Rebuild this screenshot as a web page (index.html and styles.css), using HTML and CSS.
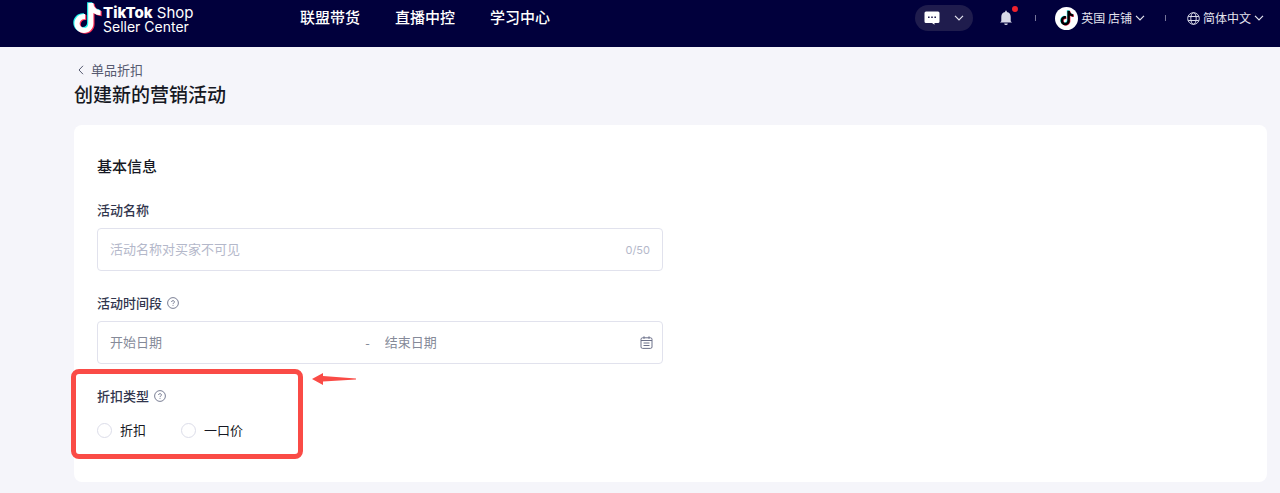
FILE: index.html
```html
<!DOCTYPE html>
<html lang="zh-CN">
<head>
  <meta charset="utf-8">
  <title>创建新的营销活动</title>
  <link rel="stylesheet" href="styles.css">
</head>
<body>
  <svg class="defs" width="0" height="0" aria-hidden="true">
    <symbol id="note" viewBox="3.3 2.4 17.4 19.2">
      <path class="cyan" transform="translate(-.7 -.5)" d="M16.6 5.82A4.278 4.278 0 0 1 15.54 3h-3.09v12.4a2.592 2.592 0 0 1-2.59 2.5c-1.42 0-2.6-1.16-2.6-2.6 0-1.72 1.66-3.01 3.37-2.48V9.66c-3.45-.46-6.47 2.22-6.47 5.64 0 3.33 2.76 5.7 5.69 5.7 3.14 0 5.69-2.55 5.69-5.7V9.01a7.35 7.35 0 0 0 4.3 1.38V7.3s-1.88.09-3.24-1.48z"/>
      <path class="red" transform="translate(.7 .5)" d="M16.6 5.82A4.278 4.278 0 0 1 15.54 3h-3.09v12.4a2.592 2.592 0 0 1-2.59 2.5c-1.42 0-2.6-1.16-2.6-2.6 0-1.72 1.66-3.01 3.37-2.48V9.66c-3.45-.46-6.47 2.22-6.47 5.64 0 3.33 2.76 5.7 5.69 5.7 3.14 0 5.69-2.55 5.69-5.7V9.01a7.35 7.35 0 0 0 4.3 1.38V7.3s-1.88.09-3.24-1.48z"/>
      <path fill="currentColor" d="M16.6 5.82A4.278 4.278 0 0 1 15.54 3h-3.09v12.4a2.592 2.592 0 0 1-2.59 2.5c-1.42 0-2.6-1.16-2.6-2.6 0-1.72 1.66-3.01 3.37-2.48V9.66c-3.45-.46-6.47 2.22-6.47 5.64 0 3.33 2.76 5.7 5.69 5.7 3.14 0 5.69-2.55 5.69-5.7V9.01a7.35 7.35 0 0 0 4.3 1.38V7.3s-1.88.09-3.24-1.48z"/>
    </symbol>
    <symbol id="chevron" viewBox="0 0 10 6">
      <path d="M1 .8l4 4 4-4" fill="none" stroke="currentColor" stroke-width="1.2"/>
    </symbol>
    <symbol id="help" viewBox="0 0 12 12">
      <circle cx="6" cy="6" r="5.4" fill="none" stroke="currentColor" stroke-width=".9"/>
      <path d="M4.6 5a1.4 1.3 0 1 1 2 1.1c-.4.2-.6.4-.6.9M6 7.9v.9" fill="none" stroke="currentColor" stroke-width=".9"/>
    </symbol>
  </svg>

  <header class="topbar">
    <a class="logo" href="#">
      <svg class="logo-note"><use href="#note"/></svg>
      <span class="logo-text">
        <span class="brand"><b>TikTok</b> Shop</span>
        <span>Seller Center</span>
      </span>
    </a>
    <nav class="nav">
      <a href="#">联盟带货</a>
      <a href="#">直播中控</a>
      <a href="#">学习中心</a>
    </nav>
    <div class="tools">
      <button class="chat" type="button" aria-label="消息">
        <svg width="16" height="14" viewBox="0 0 16 14">
          <path d="M2 .5h12A1.5 1.5 0 0 1 15.5 2v8.5A1.5 1.5 0 0 1 14 12h-3.500v1.8L8 12H2A1.5 1.5 0 0 1 .5 10.5V2A1.5 1.5 0 0 1 2 .5z" fill="#fff"/>
          <path d="M4 5.5h1.6V7H4zM7.2 5.5h1.6V7H7.2zM10.4 5.5H12V7h-1.6z" fill="#1f1c4d"/>
        </svg>
        <svg class="chevron"><use href="#chevron"/></svg>
      </button>
      <button class="bell" type="button" aria-label="通知">
        <svg width="14" height="16" viewBox="0 0 14 16">
          <path d="M6.2.8h1.6v1.3c2.5.4 3.9 2.2 3.9 4.7v4.4l1.3 1.3H1l1.3-1.3V6.8c0-2.5 1.4-4.3 3.9-4.7zM5.2 13.5h3.6a1.8 1.5 0 0 1-3.6 0z" fill="#d9dae8"/>
        </svg>
        <span class="dot"></span>
      </button>
      <span class="divider"></span>
      <button class="shop" type="button">
        <span class="avatar"><svg width="14" height="16"><use href="#note"/></svg></span>
        <span>英国 店铺</span>
        <svg class="chevron"><use href="#chevron"/></svg>
      </button>
      <span class="divider"></span>
      <button class="lang" type="button">
        <svg width="13" height="13" viewBox="0 0 13 13" fill="none" stroke="#d9dae8">
          <circle cx="6.5" cy="6.5" r="5.8"/>
          <ellipse cx="6.5" cy="6.5" rx="2.7" ry="5.8"/>
          <path d="M1.2 4.5h10.6M1.2 8.5h10.6"/>
        </svg>
        <span>简体中文</span>
        <svg class="chevron"><use href="#chevron"/></svg>
      </button>
    </div>
  </header>

  <main class="page">
    <a class="back" href="#">
      <svg width="6" height="10" viewBox="0 0 6 10"><path d="M5 .8L1 5l4 4.2" fill="none" stroke="currentColor"/></svg>
      单品折扣
    </a>
    <h1>创建新的营销活动</h1>

    <form class="card">
      <h2>基本信息</h2>

      <div class="field">
        <label class="label" for="name">活动名称</label>
        <div class="box">
          <input id="name" type="text" maxlength="50" placeholder="活动名称对买家不可见">
          <span class="count">0/50</span>
        </div>
      </div>

      <div class="field">
        <label class="label" for="start">活动时间段 <svg class="help"><use href="#help"/></svg></label>
        <div class="box dates">
          <input id="start" type="text" placeholder="开始日期">
          <span class="dash">-</span>
          <input type="text" placeholder="结束日期" aria-label="结束日期">
          <svg width="13" height="13" viewBox="0 0 13 13" fill="none" stroke="#6b7089">
            <rect x="1" y="1.8" width="11" height="10.6" rx="1.5"/>
            <path d="M1 4.5h11M4 .3v2.5M9 .3v2.5M3.5 7h6M3.5 9.5h6"/>
          </svg>
        </div>
      </div>

      <div class="discount">
        <fieldset>
          <legend class="label">折扣类型 <svg class="help"><use href="#help"/></svg></legend>
          <div class="options">
            <label><input type="radio" name="type" value="percent">折扣</label>
            <label><input type="radio" name="type" value="fixed">一口价</label>
          </div>
        </fieldset>
        <span class="mark"></span>
        <svg class="arrow" width="44" height="12" viewBox="0 0 44 12"><path d="M0 6L11 0v3l33 2.6v1L11 8.5V12z" fill="#fa4b46"/></svg>
      </div>
    </form>
  </main>
</body>
</html>
```
FILE: styles.css
```css
* {
    box-sizing: border-box;
}

body {
    margin: 0;
    background: #f5f5fa;
    color: #161823;
    font-family: "Noto Sans CJK SC", sans-serif;
    font-size: 13px;
    line-height: 20px;
}

a {
    color: inherit;
    text-decoration: none;
}

button {
    display: flex;
    align-items: center;
    padding: 0;
    border: none;
    background: none;
    color: #e4e4ef;
    font: inherit;
    cursor: pointer;
}

svg {
    flex: none;
}

.defs {
    position: absolute;
}

.cyan {
    fill: #25f4ee;
}

.red {
    fill: #fe2c55;
}

/* top bar */
.topbar {
    display: flex;
    align-items: center;
    padding: 0 16px 11px 73px;
    background: #01003c;
    color: #fff;
}

.logo {
    display: flex;
    align-items: center;
    gap: 1px;
    width: 227px;
    height: 36px;
}

.logo-note {
    width: 29px;
    height: 32px;
}

.logo-text {
    display: flex;
    flex-direction: column;
    padding-top: 4px;
    font-family: Inter, sans-serif;
    font-size: 14px;
    line-height: 14px;
    white-space: nowrap;
}

.brand {
    font-size: 15px;
}

.brand b {
    font-weight: 800;
}

.nav {
    display: flex;
    gap: 35px;
    padding-bottom: 2px;
    font-size: 15px;
    font-weight: 500;
    white-space: nowrap;
}

.tools {
    display: flex;
    align-items: center;
    margin-left: auto;
    font-size: 12px;
    white-space: nowrap;
}

.chevron {
    width: 10px;
    height: 6px;
}

.chat {
    gap: 14px;
    height: 26px;
    padding: 0 9px;
    border-radius: 13px;
    background: #1f1c4d;
}

.bell {
    position: relative;
    margin: 0 22px 0 26px;
}

.dot {
    position: absolute;
    top: -4px;
    right: -5px;
    width: 6px;
    height: 6px;
    border-radius: 50%;
    background: #f0222d;
}

.divider {
    width: 1px;
    height: 6px;
    background: #77769a;
}

.shop {
    gap: 3px;
    margin: 0 20px 0 19px;
}

.avatar {
    display: flex;
    align-items: center;
    justify-content: center;
    width: 23px;
    height: 23px;
    border-radius: 50%;
    background: #fff;
    color: #000;
}

.lang {
    gap: 3px;
    margin-left: 21px;
}

/* page */
.page {
    padding: 13px 13px 11px 74px;
}

.back {
    display: flex;
    align-items: center;
    gap: 7px;
    padding-left: 4px;
    color: #565a70;
}

h1 {
    margin: 0 0 17px;
    font-size: 19px;
    font-weight: 500;
    line-height: 28px;
}

.card {
    padding: 30px 23px 42px;
    border-radius: 8px;
    background: #fff;
}

h2 {
    margin: 0 0 23px;
    font-size: 15px;
    font-weight: 500;
    line-height: 22px;
}

.field {
    max-width: 566px;
    margin-bottom: 22px;
}

.label {
    display: flex;
    align-items: center;
    gap: 5px;
    margin-bottom: 8px;
    padding: 0;
    color: #31354d;
    font-weight: 500;
}

.help {
    width: 12px;
    height: 12px;
    color: #6b7089;
}

.box {
    display: flex;
    align-items: center;
    height: 43px;
    padding: 0 12px;
    border: 1px solid #e1e2ed;
    border-radius: 4px;
}

.box input {
    flex: 1;
    min-width: 0;
    padding: 0 0 2px;
    border: none;
    outline: none;
    background: none;
    color: #161823;
    font: inherit;
}

.box input::placeholder {
    color: #b4b8ca;
}

.count {
    color: #b4b8ca;
    font-family: Inter, sans-serif;
    font-size: 11px;
}

.dates {
    padding-right: 9px;
}

.dates input::placeholder {
    color: #858a99;
}

.dash {
    margin-right: 15px;
    color: #858a99;
}

.discount {
    position: relative;
}

fieldset {
    min-width: 0;
    margin: 0;
    padding: 0;
    border: none;
}

.discount .label {
    margin-bottom: 14px;
}

.options {
    display: flex;
    gap: 35px;
}

.options label {
    display: flex;
    align-items: center;
    gap: 8px;
}

.options input {
    appearance: none;
    width: 15px;
    height: 15px;
    margin: 0;
    border: 1px solid #dcdde9;
    border-radius: 50%;
    background: #fff;
}

.options input:checked {
    border: 4px solid #009995;
}

/* red marker over the discount type */
.mark {
    position: absolute;
    top: -17px;
    left: -26px;
    width: 232px;
    height: 90px;
    border: 5px solid #fa4b46;
    border-radius: 8px;
    pointer-events: none;
}

.arrow {
    position: absolute;
    top: -13px;
    left: 215px;
}
```
